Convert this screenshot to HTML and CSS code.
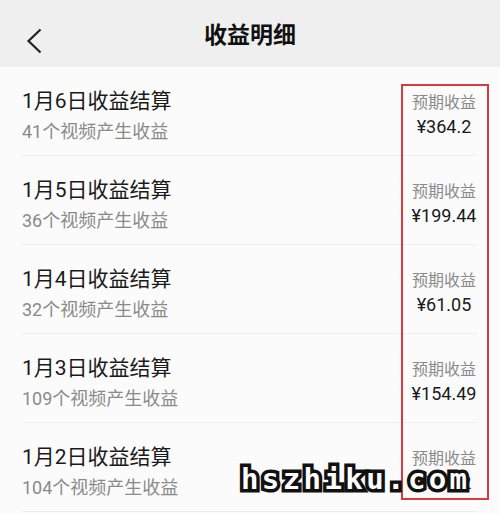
FILE: index.html
```html
<!DOCTYPE html>
<html lang="zh-CN">
<head>
    <meta charset="UTF-8">
    <meta name="viewport" content="width=device-width, initial-scale=1.0">
    <title>收益明细</title>
    <link rel="stylesheet" href="styles.css">
</head>
<body>
    <header class="topbar">
        <svg class="back" width="16" height="26" viewBox="0 0 16 26">
            <path d="M14.5 1.5 L2.5 13 L14.5 24.5" fill="none" stroke="#222" stroke-width="2.2"/>
        </svg>
        <h1>收益明细</h1>
    </header>
    <div class="list">
        <div class="row">
            <div class="info">
                <div class="title">1月6日收益结算</div>
                <div class="sub">41个视频产生收益</div>
            </div>
            <div class="amount">
                <div class="label">预期收益</div>
                <div class="money">¥364.2</div>
            </div>
        </div>
        <div class="row">
            <div class="info">
                <div class="title">1月5日收益结算</div>
                <div class="sub">36个视频产生收益</div>
            </div>
            <div class="amount">
                <div class="label">预期收益</div>
                <div class="money">¥199.44</div>
            </div>
        </div>
        <div class="row">
            <div class="info">
                <div class="title">1月4日收益结算</div>
                <div class="sub">32个视频产生收益</div>
            </div>
            <div class="amount">
                <div class="label">预期收益</div>
                <div class="money">¥61.05</div>
            </div>
        </div>
        <div class="row">
            <div class="info">
                <div class="title">1月3日收益结算</div>
                <div class="sub">109个视频产生收益</div>
            </div>
            <div class="amount">
                <div class="label">预期收益</div>
                <div class="money">¥154.49</div>
            </div>
        </div>
        <div class="row">
            <div class="info">
                <div class="title">1月2日收益结算</div>
                <div class="sub">104个视频产生收益</div>
            </div>
            <div class="amount">
                <div class="label">预期收益</div>
                <div class="money">¥70.12</div>
            </div>
        </div>
    </div>
    <div class="highlight"></div>
    <div class="watermark">hszhiku.com</div>
</body>
</html>
```

FILE: styles.css
```css
body {
    margin: 0;
    padding: 0;
    background-color: #fbfbfb;
    font-family: Roboto, "Noto Sans CJK SC", sans-serif;
    color: #1c1c1c;
    width: 500px;
    height: 514px;
    overflow: hidden;
    position: relative;
}
.topbar {
    height: 67px;
    background-color: #efefef;
    display: flex;
    align-items: center;
    justify-content: center;
    position: relative;
}
.topbar h1 {
    margin: 0;
    font-size: 23px;
    font-weight: bold;
    color: #111;
    line-height: 1;
    padding-top: 4px;
}
.back {
    position: absolute;
    left: 26px;
    top: 28px;
}
.list {
    display: flex;
    flex-direction: column;
}
.row {
    height: 89px;
    box-sizing: border-box;
    margin: 0 22px;
    padding-top: 21px;
    display: flex;
    justify-content: space-between;
    align-items: flex-start;
    border-bottom: 1px solid #efefef;
}
.title {
    font-size: 21px;
    line-height: 26px;
    color: #1a1a1a;
}
.sub {
    font-size: 18px;
    line-height: 24px;
    margin-top: 6px;
    color: #8a8a8a;
}
.amount {
    width: 86px;
    margin-right: -9px;
    text-align: center;
    padding-top: 4px;
}
.label {
    font-size: 16px;
    line-height: 22px;
    color: #8a8a8a;
}
.money {
    font-size: 18px;
    line-height: 24px;
    margin-top: 1px;
    color: #1a1a1a;
}
.highlight {
    position: absolute;
    left: 401px;
    top: 84px;
    width: 84px;
    height: 412px;
    border: 2.5px solid #d83a3e;
}
.watermark {
    position: absolute;
    left: 241px;
    top: 462px;
    font-family: "DejaVu Sans Mono", monospace;
    font-weight: bold;
    font-size: 29px;
    letter-spacing: 3.4px;
    color: #fff;
    -webkit-text-stroke: 7px #111;
    paint-order: stroke fill;
}
```
